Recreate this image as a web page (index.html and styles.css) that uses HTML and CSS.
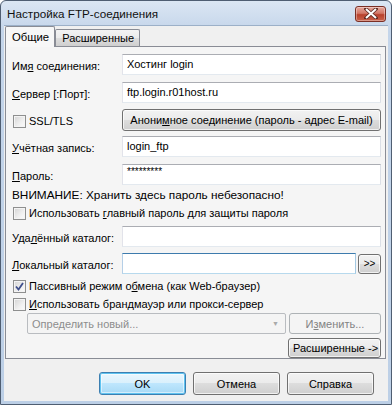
FILE: index.html
```html
<!DOCTYPE html>
<html lang="ru">
<head>
  <meta charset="UTF-8">
  <title>Настройка FTP-соединения</title>
  <link rel="stylesheet" href="styles.css">
</head>
<body>
  <div class="window">
    <div class="titlebar">
      <span class="title">Настройка FTP-соединения</span>
      <button class="close-btn" title="Закрыть">
        <svg width="14" height="11" viewBox="0 0 14 11">
          <path d="M2 1 L12 10 M12 1 L2 10" stroke="#5b2a22" stroke-width="3.6" stroke-linecap="square"/>
          <path d="M2 1 L12 10 M12 1 L2 10" stroke="#fff" stroke-width="2"/>
        </svg>
      </button>
    </div>
    <div class="client">
      <div class="tabs">
        <div class="tab tab-active">Общие</div>
        <div class="tab">Расширенные</div>
      </div>
      <div class="panel">
        <div class="row row-first">
          <span class="lbl">Им<u>я</u> соединения:</span>
          <div class="field">Хостинг login</div>
        </div>
        <div class="row">
          <span class="lbl"><u>С</u>ервер [:Порт]:</span>
          <div class="field">ftp.login.r01host.ru</div>
        </div>
        <div class="row row-btn">
          <label class="lbl check"><span class="box"></span><span>SSL/TLS</span></label>
          <button class="btn btn-wide">Анони<u>м</u>ное соединение (пароль - адрес E-mail)</button>
        </div>
        <div class="row row-close">
          <span class="lbl"><u>У</u>чётная запись:</span>
          <div class="field">login_ftp</div>
        </div>
        <div class="row">
          <span class="lbl"><u>П</u>ароль:</span>
          <div class="field field-pass">*********</div>
        </div>
        <div class="line warn">ВНИМАНИЕ: Хранить здесь пароль небезопасно!</div>
        <label class="line check"><span class="box"></span><span>Использовать <u>г</u>лавный пароль для защиты пароля</span></label>
        <div class="row row-mid">
          <span class="lbl">Уда<u>л</u>ённый каталог:</span>
          <div class="field"></div>
        </div>
        <div class="row row-mid">
          <span class="lbl"><u>Л</u>окальный каталог:</span>
          <div class="field field-hover"></div>
          <button class="btn btn-small">&gt;&gt;</button>
        </div>
        <label class="line check line-after-row"><span class="box">
          <svg width="9" height="9" viewBox="0 0 9 9"><path d="M1 4.5 L3.5 7.5 L8 1" fill="none" stroke="#3f4f8c" stroke-width="1.8"/></svg>
        </span><span>Пассивный режим о<u>б</u>мена (как Web-браузер)</span></label>
        <label class="line check"><span class="box"></span><span><u>И</u>спользовать брандмауэр или прокси-сервер</span></label>
        <div class="row row-proxy">
          <div class="combo">
            <span>Определить новый...</span>
            <span class="arrow">&#9660;</span>
          </div>
          <button class="btn btn-disabled">И<u>з</u>менить...</button>
        </div>
        <div class="row row-adv">
          <button class="btn btn-adv">Расширенные -&gt;</button>
        </div>
      </div>
      <div class="footer">
        <button class="btn btn-dialog btn-default">OK</button>
        <button class="btn btn-dialog">Отмена</button>
        <button class="btn btn-dialog">Справка</button>
      </div>
    </div>
  </div>
</body>
</html>
```

FILE: styles.css
```css
html, body {
  margin: 0;
  padding: 0;
  width: 392px;
  height: 405px;
  overflow: hidden;
  background: #fff;
  font-family: 'Liberation Sans', Arial, sans-serif;
  font-size: 11px;
  color: #000;
}
.window {
  width: 392px;
  height: 405px;
  box-sizing: border-box;
  border: 1px solid #4f5e72;
  border-radius: 6px 6px 0 0;
  background: linear-gradient(180deg, #dbe6f3 0%, #c4d5ea 30px, #bccfe6 100%);
  padding: 0 3px 3px 3px;
  display: flex;
  flex-direction: column;
}
.titlebar {
  height: 24px;
  display: flex;
  align-items: center;
  justify-content: space-between;
  padding: 0 2px 0 3px;
}
.title {
  font-size: 11.7px;
  color: #111;
  margin-top: 1px;
}
.close-btn {
  width: 31px;
  height: 16px;
  margin-top: 1px;
  padding: 0;
  border: 1px solid #7b2f25;
  border-radius: 3px;
  background: linear-gradient(180deg, #e6a89d 0%, #d27766 45%, #b8412c 55%, #c9624b 100%);
  box-shadow: inset 0 0 0 1px rgba(255,255,255,0.35);
  display: flex;
  align-items: center;
  justify-content: center;
}
.client {
  flex: 1;
  background: #f0f0f0;
  border-top: 1px solid #9cb0c8;
  display: flex;
  flex-direction: column;
  padding: 0 2px 0 1px;
}
.tabs {
  display: flex;
  align-items: flex-end;
  height: 20px;
  position: relative;
  z-index: 1;
}
.tab {
  box-sizing: border-box;
  height: 17px;
  padding: 0 5px 0 6px;
  border: 1px solid #898c95;
  border-bottom: none;
  border-radius: 2px 2px 0 0;
  background: linear-gradient(180deg, #f3f3f3 0%, #ebebeb 50%, #dddddd 51%, #cfcfcf 100%);
  line-height: 16px;
  font-size: 11px;
}
.tab-active {
  height: 21px;
  padding: 0 5px 0 6px;
  margin-bottom: -1px;
  background: #f7f7f7;
  line-height: 20px;
  font-size: 11.3px;
}
.panel {
  flex: 0 0 auto;
  border: 1px solid #898c95;
  background: #f5f5f5;
  padding: 0 4px 0 6px;
  display: flex;
  flex-direction: column;
}
.row {
  display: flex;
  align-items: center;
  height: 21px;
  margin-top: 7px;
}
.row-btn {
  height: 22px;
  margin-top: 6px;
}
.row-close { margin-top: 5px; }
.row-mid { margin-top: 6px; }
.lbl {
  width: 110px;
  flex: 0 0 110px;
  white-space: nowrap;
  padding-top: 2px;
}
.field {
  flex: 1;
  height: 21px;
  box-sizing: border-box;
  border: 1px solid #abadb3;
  border-color: #abadb3 #dbdfe6 #e3e9ef #e2e3ea;
  background: #fff;
  padding: 0 4px;
  line-height: 19px;
  white-space: nowrap;
}
.field-hover {
  border-color: #3d7bad #a4c9e3 #b7d9ed #b5cfe7;
}
.field-pass {
  font-size: 10px;
  line-height: 13px;
}
.line {
  display: flex;
  align-items: center;
  height: 14px;
  white-space: nowrap;
}
.check {
  display: flex;
  align-items: center;
}
.warn {
  margin-top: 3px;
  font-size: 11.8px;
}
.warn + .check { margin-top: 4px; }
.line-after-row { margin-top: 5px; }
.line-after-row + .check { margin-top: 4px; }
.check .box {
  width: 13px;
  height: 13px;
  box-sizing: border-box;
  flex: 0 0 13px;
  margin: 0 3px 0 1px;
  border: 1px solid #8e8f8f;
  background: linear-gradient(135deg, #d4d4d4 0%, #f0f0f0 60%, #fbfbfb 100%);
  box-shadow: inset 0 0 0 1px #f4f4f4;
  display: flex;
  align-items: center;
  justify-content: center;
}
.btn {
  font-family: inherit;
  font-size: 11px;
  font-weight: normal;
  color: #000;
  box-sizing: border-box;
  border: 1px solid #707070;
  border-radius: 3px;
  background: linear-gradient(180deg, #f2f2f2 0%, #ebebeb 49%, #dddddd 50%, #cfcfcf 100%);
  box-shadow: inset 0 0 0 1px rgba(255,255,255,0.7);
  padding: 0 6px;
  white-space: nowrap;
  cursor: default;
}
.btn-wide {
  flex: 1;
  height: 22px;
}
.btn-small {
  width: 23px;
  height: 20px;
  margin-left: 2px;
  padding: 0;
  font-size: 10px;
}
.row-proxy {
  margin-top: 2px;
  padding-left: 15px;
}
.combo {
  flex: 1;
  height: 21px;
  box-sizing: border-box;
  border: 1px solid #b9bcc0;
  border-radius: 2px;
  background: #f4f4f4;
  color: #8d8d8d;
  display: flex;
  align-items: center;
  justify-content: space-between;
  padding: 0 6px 0 4px;
}
.combo .arrow {
  font-size: 7px;
  color: #a9a9a9;
}
.btn-disabled {
  width: 92px;
  height: 21px;
  margin-left: 3px;
  color: #838383;
  border-color: #adb2b5;
  background: #f4f4f4;
  box-shadow: none;
}
.row-adv {
  margin-top: 4px;
  height: 20px;
  justify-content: flex-end;
}
.btn-adv {
  height: 20px;
  width: 93px;
  padding: 0 4px;
}
.footer {
  display: flex;
  justify-content: flex-end;
  gap: 7px;
  padding: 13px 12px 0 0;
}
.btn-dialog {
  width: 87px;
  height: 23px;
}
.btn-default {
  border-color: #3c7fb1;
  box-shadow: inset 0 0 0 1px #5fc3f0, inset 0 0 0 2px rgba(255,255,255,0.5);
  background: linear-gradient(180deg, #eaf6fd 0%, #d9f0fc 49%, #bee6fd 50%, #a7d9f5 100%);
}
```
